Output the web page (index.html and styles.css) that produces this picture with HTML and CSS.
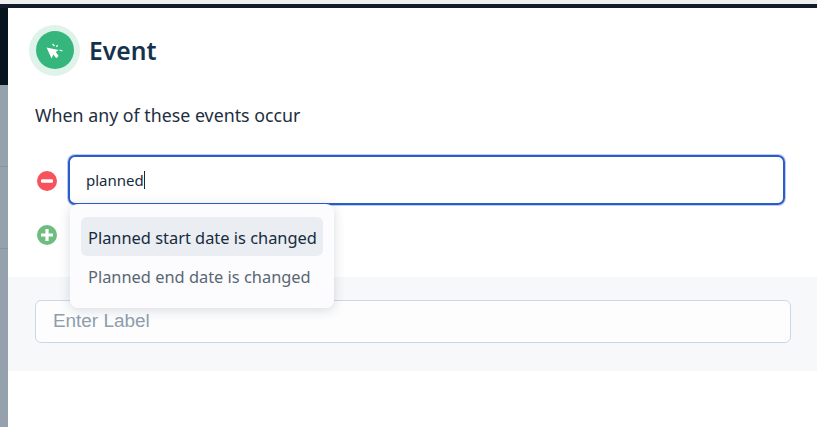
FILE: index.html
```html
<!DOCTYPE html>
<html lang="en">
<head>
<meta charset="utf-8">
<title>Event</title>
<link rel="stylesheet" href="styles.css">
</head>
<body>
<div class="topstrip"></div>
<div class="topbar"></div>
<div class="main">
  <aside class="backdrop">
    <div class="backdrop-dark"></div>
    <div class="backdrop-row"></div>
    <div class="backdrop-row"></div>
    <div class="backdrop-fill"></div>
  </aside>
  <section class="panel">
    <header class="header">
      <span class="badge-ring">
        <span class="badge">
          <svg class="badge-icon" viewBox="0 0 18 18" width="18" height="18">
            <path d="M0.5 6.5 L12.5 9 L9.8 11 L12.6 15 L10.2 17.2 L7.4 13.4 L5.6 17.5 Z" fill="#fff"/>
            <path d="M6.5 3 L8.5 5 M11.5 4 L10.5 6 M13.5 9 L16.5 10" stroke="#fff" stroke-width="1.2" fill="none"/>
          </svg>
        </span>
      </span>
      <h1 class="title">Event</h1>
    </header>
    <p class="intro">When any of these events occur</p>
    <div class="rows">
      <div class="row">
        <svg class="round-btn" viewBox="0 0 20 20" width="20" height="20">
          <circle cx="10" cy="10" r="10" fill="#f8525a"/>
          <rect x="4" y="8.2" width="12" height="3.6" rx="1.2" fill="#fff"/>
        </svg>
        <div class="field">
          <span class="field-text">planned</span><span class="caret"></span>
        </div>
      </div>
      <div class="row row-add">
        <svg class="round-btn" viewBox="0 0 20 20" width="20" height="20">
          <circle cx="10" cy="10" r="10" fill="#6dbd81"/>
          <path d="M4 8.4 H8.4 V4 H11.6 V8.4 H16 V11.6 H11.6 V16 H8.4 V11.6 H4 Z" fill="#fff"/>
        </svg>
      </div>
      <ul class="menu">
        <li class="menu-item is-active">Planned start date is changed</li>
        <li class="menu-item">Planned end date is changed</li>
      </ul>
    </div>
    <div class="label-band">
      <input class="label-input" type="text" placeholder="Enter Label">
    </div>
  </section>
</div>
</body>
</html>
```
FILE: styles.css
```css
* { box-sizing: border-box; }
html, body { margin: 0; height: 100%; overflow: hidden; background: #fff; }
body { display: flex; flex-direction: column; font-family: "Noto Sans", sans-serif; color: #172b3e; }
.topstrip { height: 4px; background: #f0f0f0; }
.topbar { height: 4px; background: #141c2c; }
.main { flex: 1; display: flex; min-height: 0; }
.backdrop { width: 8px; display: flex; flex-direction: column; background: #95a1ac; }
.backdrop-dark { height: 77px; background: #06141e; }
.backdrop-row { height: 82px; border-bottom: 1px solid #87939e; }
.backdrop-fill { flex: 1; }
.panel { flex: 1; min-width: 0; background: #fff; }
.header { display: flex; align-items: center; height: 76px; padding: 17px 0 9px 21px; }
.badge-ring { width: 51px; height: 51px; border-radius: 50%; background: #e0f3eb; display: flex; align-items: center; justify-content: center; }
.badge { width: 38px; height: 38px; border-radius: 50%; background: #35b67c; display: flex; align-items: center; justify-content: center; }
.title { margin: 2px 0 0 9px; font-size: 24.7px; line-height: 32px; font-weight: 600; color: #15324c; }
.intro { margin: 20px 0 0 27px; font-size: 17.8px; line-height: 23px; color: #1d2e3d; }
.rows { position: relative; margin-top: 28px; height: 122px; }
.row { display: flex; align-items: center; height: 50px; padding-left: 29px; }
.row .round-btn { margin-top: 2px; }
.row-add { height: 20px; margin-top: 19px; }
.field { margin-left: 11px; width: 717px; height: 50px; border: 2px solid #2b5cc7; border-radius: 7px; box-shadow: 0 0 0 1px #b9ccef; display: flex; align-items: center; padding-left: 16px; font-size: 15px; color: #172b3e; }
.caret { width: 1px; height: 18px; background: #172b3e; }
.menu { position: absolute; left: 62px; top: 49px; width: 264px; margin: 0; padding: 13px 11px; list-style: none; background: #fcfcfe; border-radius: 8px; box-shadow: 0 2px 12px rgba(40,55,80,.18); }
.menu-item { height: 39px; padding: 2px 7px 0; border-radius: 6px; font-size: 16.4px; line-height: 37px; color: #5a6672; white-space: nowrap; }
.is-active { background: #eaedf2; color: #172b3e; }
.label-band { height: 94px; padding: 23px 26px 0 27px; background: #f7f8fa; }
.label-input { display: block; width: 100%; height: 43px; padding: 0 17px 2px; border: 1px solid #cbd8e6; border-radius: 6px; background: #fdfdfe; font-family: "Liberation Sans", sans-serif; font-size: 18.9px; outline: none; }
.label-input::placeholder { color: #8f9dad; opacity: 1; }
```
